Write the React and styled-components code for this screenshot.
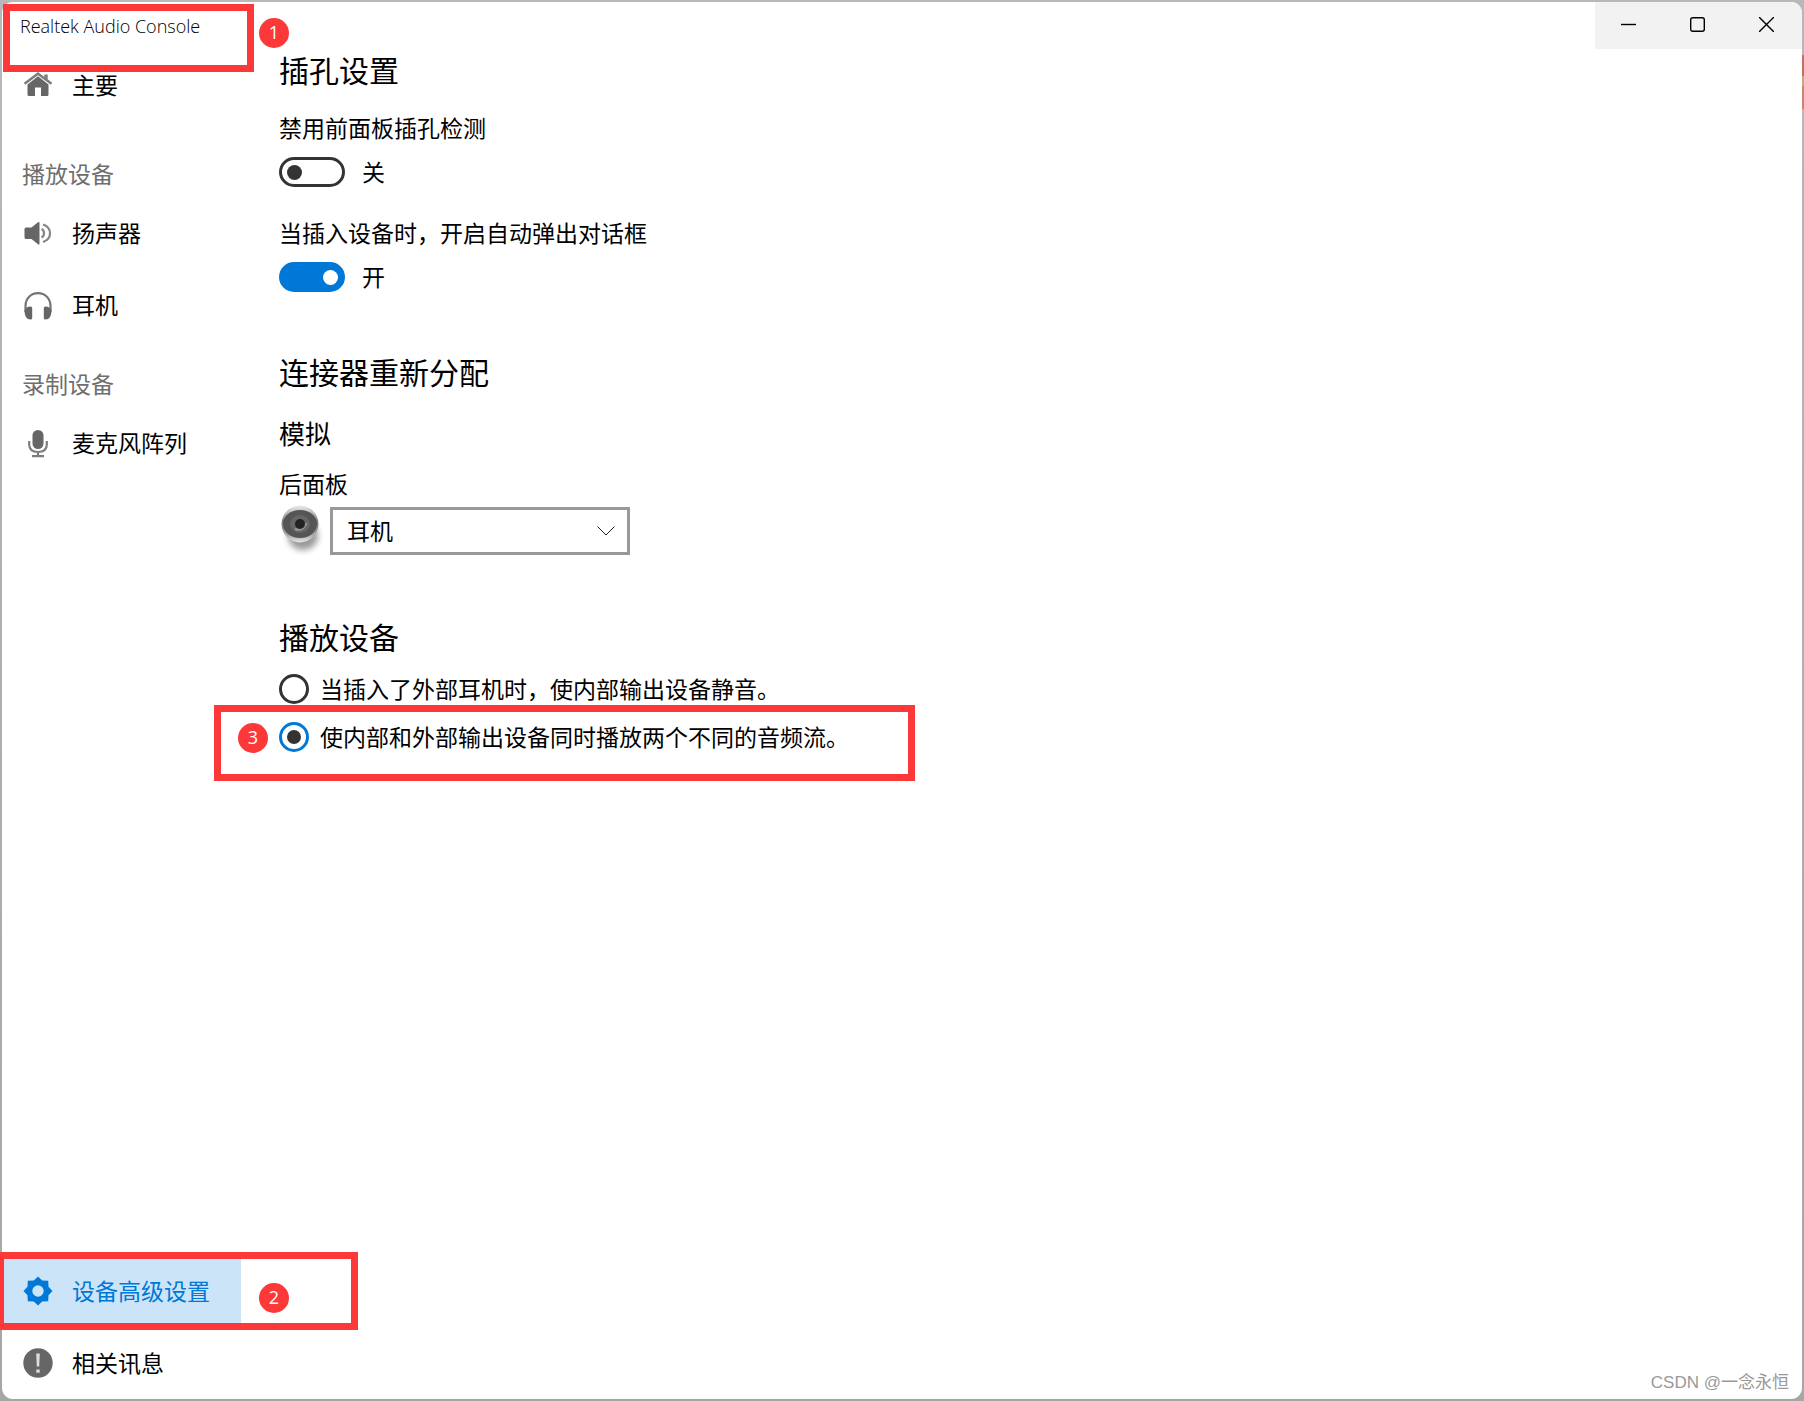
import React, { useState } from 'react';
import styled, { createGlobalStyle, css } from 'styled-components';

const GlobalStyle = createGlobalStyle`
  * {
    box-sizing: border-box;
  }

  body {
    margin: 0;
    color: #000;
    font-family: 'Noto Sans', 'Noto Sans CJK SC', sans-serif;
    font-size: 23px;
    line-height: 30px;
  }

  button, select, input {
    font: inherit;
    color: inherit;
  }
`;

// the window edge, with a sliver of the desktop showing on the right
const Desktop = styled.div`
  min-height: 100vh;
  padding: 2px;
  display: flex;
  background:
    linear-gradient(#c9705c 21px, #bcae80 21px 31px, #d08468 31px) right 55px /
      2px 54px no-repeat,
    linear-gradient(#b8b8b8, #a6a6a6);
`;

const Window = styled.div`
  position: relative;
  flex: 1;
  display: flex;
  flex-direction: column;
  background-color: #fff;
  border-radius: 11px;
`;

const TitleBar = styled.header`
  position: relative;
  display: flex;
  justify-content: space-between;
  height: 47px;
`;

const Title = styled.span`
  padding: 9px 0 0 18px;
  font-family: 'Open Sans', 'Noto Sans', sans-serif;
  font-size: 18px;
  font-weight: 300;
`;

const Caption = styled.div`
  display: flex;
  height: 47px;
  background-color: #f2f2f2;
  border-top-right-radius: 11px;

  button {
    width: 69px;
    padding: 0 2px 2px 0;
    border: 0;
    background: none;
    display: flex;
    align-items: center;
    justify-content: center;
  }
`;

const Body = styled.div`
  flex: 1;
  display: flex;
`;

const Sidebar = styled.nav`
  width: 239px;
  flex-shrink: 0;
  display: flex;
  flex-direction: column;
`;

const GroupLabel = styled.div`
  height: 46px;
  margin-top: ${({ $gap }) => $gap}px;
  padding: 8px 0 0 20px;
  color: #6e6e6e;
`;

const NavItem = styled.a`
  position: relative;
  display: flex;
  align-items: center;
  gap: 19px;
  height: 72px;
  padding-left: 21px;
  color: #000;
  text-decoration: none;
  white-space: nowrap;

  svg {
    flex-shrink: 0;
    color: #666;
  }

  ${({ $active }) =>
    $active &&
    css`
      background-color: #cce4f7;
      color: #0078d7;

      svg {
        color: #0078d7;
      }
    `}
`;

const Spacer = styled.div`
  flex: 1;
`;

const Content = styled.main`
  flex: 1;
  padding: 2px 0 0 38px;
`;

const Section = styled.section`
  padding-bottom: 61px;
`;

const Heading = styled.h2`
  margin: 0;
  font-size: 30px;
  font-weight: 400;
  line-height: 40px;
`;

const SubHeading = styled.h3`
  margin: 24px 0 18px;
  font-size: 26px;
  font-weight: 400;
  line-height: 34px;
`;

const Setting = styled.div`
  margin-top: ${({ $gap }) => $gap}px;
`;

const SwitchRow = styled.label`
  display: flex;
  align-items: center;
  gap: 17px;
  margin-top: 14px;
`;

const Switch = styled.input`
  appearance: none;
  width: 66px;
  height: 30px;
  margin: 0;
  padding: 0 5px;
  display: flex;
  align-items: center;
  border: 3px solid #333;
  border-radius: 15px;
  background-color: #fff;

  &::before {
    content: '';
    width: 15px;
    height: 15px;
    border-radius: 50%;
    background-color: #333;
  }

  &:checked {
    justify-content: flex-end;
    padding-right: 4px;
    border-color: #0078d7;
    background-color: #0078d7;
  }

  &:checked::before {
    background-color: #fff;
  }
`;

const JackRow = styled.div`
  display: flex;
  gap: 5px;
  margin-top: 6px;
`;

const SelectBox = styled.div`
  width: 300px;
  display: grid;
  align-items: center;

  select,
  svg {
    grid-area: 1 / 1;
  }

  select {
    appearance: none;
    width: 100%;
    height: 48px;
    padding: 0 48px 0 14px;
    border: 3px solid #999;
    border-radius: 0;
    background-color: #fff;
  }

  svg {
    justify-self: end;
    margin-right: 15px;
    pointer-events: none;
  }
`;

const Options = styled.div`
  margin-top: 7px;
`;

const RadioRow = styled.label`
  position: relative;
  width: fit-content;
  height: 48px;
  display: flex;
  align-items: center;
  gap: 11px;
`;

const Radio = styled.input`
  appearance: none;
  flex-shrink: 0;
  width: 30px;
  height: 30px;
  margin: 0;
  display: grid;
  place-items: center;
  border: 3px solid #333;
  border-radius: 50%;

  &:checked {
    border-color: #0078d7;
  }

  &:checked::before {
    content: '';
    width: 14px;
    height: 14px;
    border-radius: 50%;
    background-color: #333;
  }
`;

// red frame and numbered dot laid over the step it points at
const Mark = styled.span`
  position: absolute;
  z-index: 2;
  top: ${({ $top }) => $top}px;
  left: ${({ $left }) => $left}px;
  width: ${({ $width }) => $width}px;
  height: ${({ $height }) => $height}px;
  border: 7px solid #fc3838;
  pointer-events: none;
`;

const Step = styled.span`
  position: absolute;
  z-index: 3;
  top: ${({ $top }) => $top}px;
  left: ${({ $left }) => $left}px;
  width: 30px;
  height: 30px;
  border-radius: 50%;
  background-color: #fc3838;
  color: #fff;
  font-family: 'Open Sans', 'Noto Sans', sans-serif;
  font-size: 18px;
  line-height: 28px;
  text-align: center;
`;

const Watermark = styled.span`
  position: absolute;
  right: 13px;
  bottom: 1px;
  color: #999;
  font-family: 'Liberation Sans', 'Noto Sans CJK SC', sans-serif;
  font-size: 17px;
`;

const HomeIcon = () => (
  <svg width="30" height="30" viewBox="0 0 30 30" fill="currentColor">
    <path
      d="M15 2 .8 12.800l1.500 1.900L15 5.200l12.700 9.500 1.500-1.900-4.500-3.500V4.600h-3.400v2.300z"
      opacity=".85"
    />
    <path d="M15 6.300 4.500 14.500v10Q4.500 26 6 26h6v-8.500h6V26h6q1.500 0 1.500-1.500v-10z" />
  </svg>
);

const SpeakerIcon = () => (
  <svg width="30" height="30" viewBox="0 0 30 30">
    <path
      d="M3 9.500h5.500L15 4.300q1.500-1 1.500.7v20.600q0 1.700-1.500.7L8.500 21H3q-1.500 0-1.500-1.500V11q0-1.500 1.500-1.500z"
      fill="currentColor"
    />
    <g fill="none" stroke="currentColor" strokeWidth="2.200">
      <path d="M18.500 11q2.500 1 2.500 4.300t-2.500 4.300" opacity=".8" />
      <path d="M20 6.500q7 2.300 7 8.800T20 24" opacity=".8" />
    </g>
  </svg>
);

const HeadphonesIcon = () => (
  <svg width="30" height="30" viewBox="0 0 30 30">
    <path
      d="M2.500 22v-6C2.500 8.500 8 3.200 15 3.200S27.500 8.500 27.500 16v6"
      fill="none"
      stroke="currentColor"
      strokeWidth="2.200"
      opacity=".9"
    />
    <path
      d="M1.500 20.500Q3 16.500 7.500 16.500q1.700 0 1.700 1.500v10q0 1.500-1.700 1.500-6 0-6-9zM28.500 20.500q-1.500-4-6-4-1.700 0-1.700 1.500v10q0 1.500 1.700 1.500 6 0 6-9z"
      fill="currentColor"
    />
  </svg>
);

const MicIcon = () => (
  <svg width="30" height="30" viewBox="0 0 30 30">
    <rect x="9.500" y="2" width="11" height="19" rx="5.500" fill="currentColor" />
    <path
      d="M6.200 13v3.500q0 7.500 8.800 7.500t8.800-7.500V13M15 24v3.500M9 28.200h12"
      fill="none"
      stroke="currentColor"
      strokeWidth="2.200"
      opacity=".85"
    />
  </svg>
);

const GearIcon = () => (
  <svg width="30" height="30" viewBox="0 0 30 30">
    <path
      d="M15 .5 19.200 4.500 25.200 4.800 25.500 10.800 29.500 15 25.500 19.200 25.200 25.200 19.200 25.500 15 29.500 10.800 25.500 4.800 25.200 4.500 19.200 .5 15 4.500 10.800 4.800 4.800 10.800 4.500zM15 9.300a5.700 5.700 0 1 0 0 11.400 5.700 5.700 0 1 0 0-11.400z"
      fill="currentColor"
      fillRule="evenodd"
    />
  </svg>
);

const InfoIcon = () => (
  <svg width="30" height="30" viewBox="0 0 30 30">
    <circle cx="15" cy="15" r="14.700" fill="currentColor" />
    <path d="M13.200 5.500h3.600l-.6 13h-2.400z" fill="#ddd" />
    <rect x="13.300" y="21.500" width="3.400" height="3.200" fill="#ddd" />
  </svg>
);

const JackIcon = () => (
  <svg width="46" height="52" viewBox="0 0 46 52">
    <defs>
      <linearGradient id="rim" x1="0" y1="0" x2="0" y2="1">
        <stop offset="0" stopColor="#eee" />
        <stop offset=".45" stopColor="#777" />
        <stop offset=".8" stopColor="#aaa" />
        <stop offset="1" stopColor="#e4e8ea" />
      </linearGradient>
      <filter id="shade" x="-50%" y="-50%" width="200%" height="200%">
        <feGaussianBlur stdDeviation="3" />
      </filter>
    </defs>
    <ellipse cx="24" cy="31" rx="15" ry="14" fill="#000" opacity=".4" filter="url(#shade)" />
    <circle cx="21" cy="19" r="18.500" fill="url(#rim)" />
    <ellipse cx="21" cy="19" rx="17" ry="14" fill="#555" />
    <ellipse cx="21" cy="19" rx="10" ry="9" fill="#666" />
    <path d="M16 24q8 3 11.500-6" fill="none" stroke="#999" strokeWidth="2" />
    <circle cx="21" cy="19" r="5" fill="#222" />
  </svg>
);

const ChevronIcon = () => (
  <svg width="18" height="10" viewBox="0 0 18 10" fill="none" stroke="#222">
    <path d="M.5.5 9 9 17.500.5" />
  </svg>
);

const App = () => {
  const [disableDetect, setDisableDetect] = useState(false);
  const [autoPopup, setAutoPopup] = useState(true);
  const [output, setOutput] = useState('separate');

  return (
    <>
      <GlobalStyle />
      <Desktop>
        <Window>
          <TitleBar>
            <Title>Realtek Audio Console</Title>
            <Caption>
              <button aria-label="最小化">
                <svg width="15" height="15" fill="none" stroke="#000" strokeWidth="1.400">
                  <path d="M0 7.500h15" />
                </svg>
              </button>
              <button aria-label="最大化">
                <svg width="15" height="15" fill="none" stroke="#000" strokeWidth="1.400">
                  <rect x=".7" y=".7" width="13.600" height="13.600" rx="2" />
                </svg>
              </button>
              <button aria-label="关闭">
                <svg width="15" height="15" fill="none" stroke="#000" strokeWidth="1.400">
                  <path d="M0 0 15 15M15 0 0 15" />
                </svg>
              </button>
            </Caption>
            <Mark $top={2} $left={1} $width={251} $height={68} />
            <Step $top={16} $left={257}>1</Step>
          </TitleBar>

          <Body>
            <Sidebar>
              <NavItem href="#main">
                <HomeIcon />
                主要
              </NavItem>
              <GroupLabel $gap={30}>播放设备</GroupLabel>
              <NavItem href="#speaker">
                <SpeakerIcon />
                扬声器
              </NavItem>
              <NavItem href="#headphones">
                <HeadphonesIcon />
                耳机
              </NavItem>
              <GroupLabel $gap={20}>录制设备</GroupLabel>
              <NavItem href="#mic">
                <MicIcon />
                麦克风阵列
              </NavItem>
              <Spacer />
              <NavItem href="#advanced" $active>
                <GearIcon />
                设备高级设置
                <Mark $top={-3} $left={-5} $width={361} $height={78} />
                <Step $top={28} $left={257}>2</Step>
              </NavItem>
              <NavItem href="#about">
                <InfoIcon />
                相关讯息
              </NavItem>
            </Sidebar>

            <Content>
              <Section>
                <Heading>插孔设置</Heading>
                <Setting $gap={22}>
                  <div id="detect">禁用前面板插孔检测</div>
                  <SwitchRow>
                    <Switch
                      type="checkbox"
                      role="switch"
                      aria-labelledby="detect"
                      checked={disableDetect}
                      onChange={(e) => setDisableDetect(e.target.checked)}
                    />
                    {disableDetect ? '开' : '关'}
                  </SwitchRow>
                </Setting>
                <Setting $gap={31}>
                  <div id="popup">当插入设备时，开启自动弹出对话框</div>
                  <SwitchRow>
                    <Switch
                      type="checkbox"
                      role="switch"
                      aria-labelledby="popup"
                      checked={autoPopup}
                      onChange={(e) => setAutoPopup(e.target.checked)}
                    />
                    {autoPopup ? '开' : '关'}
                  </SwitchRow>
                </Setting>
              </Section>

              <Section>
                <Heading>连接器重新分配</Heading>
                <SubHeading>模拟</SubHeading>
                <label htmlFor="rear">后面板</label>
                <JackRow>
                  <JackIcon />
                  <SelectBox>
                    <select id="rear" defaultValue="耳机">
                      <option>耳机</option>
                      <option>扬声器</option>
                    </select>
                    <ChevronIcon />
                  </SelectBox>
                </JackRow>
              </Section>

              <Section>
                <Heading>播放设备</Heading>
                <Options>
                  <RadioRow>
                    <Radio
                      type="radio"
                      name="output"
                      checked={output === 'mute'}
                      onChange={() => setOutput('mute')}
                    />
                    当插入了外部耳机时，使内部输出设备静音。
                  </RadioRow>
                  <RadioRow>
                    <Radio
                      type="radio"
                      name="output"
                      checked={output === 'separate'}
                      onChange={() => setOutput('separate')}
                    />
                    使内部和外部输出设备同时播放两个不同的音频流。
                    <Mark $top={-8} $left={-65} $width={701} $height={76} />
                    <Step $top={10} $left={-41}>3</Step>
                  </RadioRow>
                </Options>
              </Section>
            </Content>
          </Body>
          <Watermark>CSDN @一念永恒</Watermark>
        </Window>
      </Desktop>
    </>
  );
};

export default App;
